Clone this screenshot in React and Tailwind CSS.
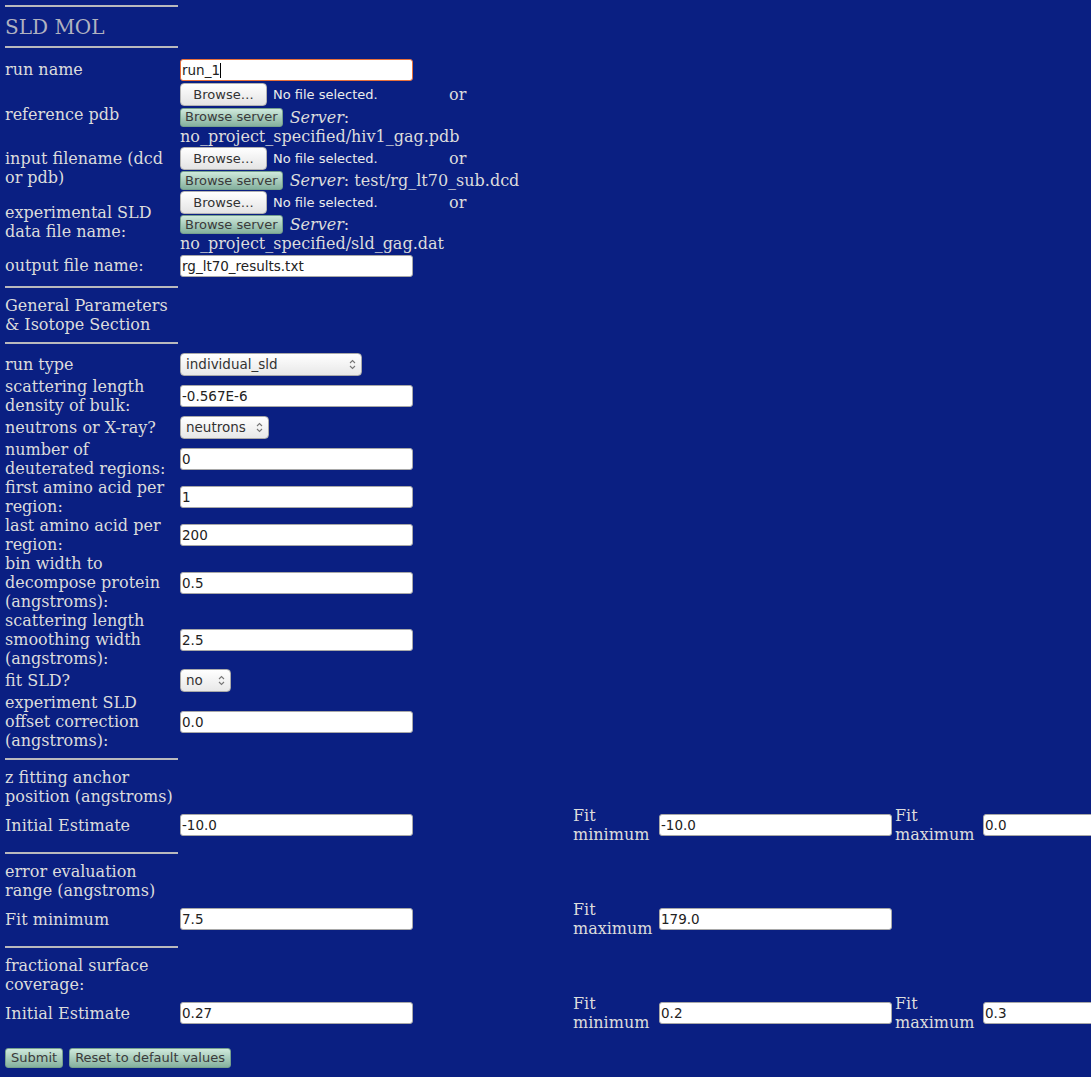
import React from 'react';

const serif = "font-['DejaVu_Serif',serif]";
const sans = "font-['DejaVu_Sans',sans-serif]";

function Rule() {
  return <div className="my-[8px] h-[2px] w-[173px] bg-[#b9b9bd]" />;
}

function TextBox({ value, focused = false }) {
  return (
    <div className="relative w-[233px] shrink-0">
      <input
        readOnly
        defaultValue={value}
        className={`${sans} block h-[22px] w-[233px] rounded-[3px] border bg-white px-[1px] text-[13.5px] text-[#222] outline-none ${
          focused ? 'border-[#e8703a]' : 'border-[#a8a8a8]'
        }`}
      />
      {focused && <span className="absolute left-[40px] top-[4px] h-[15px] w-px bg-black" />}
    </div>
  );
}

function Select({ value, width }) {
  return (
    <div className={`relative shrink-0 ${width}`}>
      <select
        defaultValue={value}
        className={`${sans} block h-[23px] w-full appearance-none rounded-[4px] border border-[#a9a9a9] bg-linear-to-b from-white to-[#e8e8e8] pl-[5px] text-[13.5px] text-[#333] outline-none`}
      >
        <option>{value}</option>
      </select>
      <svg
        className="pointer-events-none absolute right-[6px] top-[6px]"
        width="7"
        height="11"
        viewBox="0 0 7 11"
      >
        <path d="M1 4 L3.5 1.5 L6 4" fill="none" stroke="#777" strokeWidth="1.1" />
        <path d="M1 7 L3.5 9.5 L6 7" fill="none" stroke="#777" strokeWidth="1.1" />
      </svg>
    </div>
  );
}

// the greenish server-side buttons; the form's own submit/reset are a touch bigger
function GreenButton({ children, tall = false }) {
  return (
    <button
      className={`${sans} ${
        tall ? 'h-[20px] px-[5px]' : 'h-[19px] px-[4px]'
      } shrink-0 rounded-[3px] border border-[#76a08e] bg-linear-to-b from-[#cfe9dc] to-[#85b19e] text-[13px] leading-[16px] text-[#3a3a3a]`}
    >
      {children}
    </button>
  );
}

function Lines({ lines }) {
  return lines.map((line, i) => (
    <React.Fragment key={i}>
      {i > 0 && <br />}
      {line}
    </React.Fragment>
  ));
}

function Row({ label, children }) {
  return (
    <div className="flex min-h-[25px] items-center">
      <div className="w-[175px] shrink-0 leading-[19px]">
        <Lines lines={label} />
      </div>
      {children}
    </div>
  );
}

function FileLine() {
  return (
    <div className="flex h-[25px] items-center">
      <div className="flex w-[269px] shrink-0 items-center">
        <button
          className={`${sans} h-[23px] w-[87px] rounded-[4px] border border-[#b3b3b3] bg-linear-to-b from-white to-[#e4e4e4] text-[13px] text-[#333]`}
        >
          Browse…
        </button>
        <span className={`${sans} ml-[6px] text-[13px] text-[#ececec]`}>No file selected.</span>
      </div>
      <span>or</span>
    </div>
  );
}

function FileField({ path, wrap, roomy = false }) {
  return (
    <div className="flex shrink-0 flex-col">
      <FileLine />
      <div className={`flex items-center leading-[19px] ${roomy ? 'h-[20px]' : 'h-[19px]'}`}>
        <GreenButton>Browse server</GreenButton>
        <span className="ml-[7px] whitespace-nowrap">
          <i>Server</i>:{!wrap && ` ${path}`}
        </span>
      </div>
      {wrap && <div className="leading-[19px]">{path}</div>}
    </div>
  );
}

function FitLabel({ width, lines }) {
  return (
    <div className={`${width} shrink-0 leading-[19px]`}>
      <Lines lines={lines} />
    </div>
  );
}

function FitRow({ label, initial, min, max }) {
  return (
    <Row label={[label]}>
      <div className="w-[393px] shrink-0">
        <TextBox value={initial} />
      </div>
      <FitLabel width="w-[86px]" lines={['Fit', 'minimum']} />
      <div className="w-[236px] shrink-0">
        <TextBox value={min} />
      </div>
      <FitLabel width="w-[88px]" lines={['Fit', 'maximum']} />
      <TextBox value={max} />
    </Row>
  );
}

export default function App() {
  return (
    <div className={`${serif} min-h-screen w-full overflow-hidden bg-[#0a1f82] pl-[5px] pt-[5px] text-[16px] text-[#dcdcdc]`}>
      <div className="h-[2px] w-[173px] bg-[#b9b9bd]" />
      <div className="mt-[8px] text-[20px] leading-[24px] text-[#b0b2c0]">SLD MOL</div>
      <div className="mb-[9px] mt-[7px] h-[2px] w-[173px] bg-[#b9b9bd]" />

      <Row label={['run name']}>
        <TextBox value="run_1" focused />
      </Row>
      <Row label={['reference pdb']}>
        <FileField path="no_project_specified/hiv1_gag.pdb" wrap roomy />
      </Row>
      <Row label={['input filename (dcd', 'or pdb)']}>
        <FileField path="test/rg_lt70_sub.dcd" />
      </Row>
      <Row label={['experimental SLD', 'data file name:']}>
        <FileField path="no_project_specified/sld_gag.dat" wrap />
      </Row>
      <Row label={['output file name:']}>
        <TextBox value="rg_lt70_results.txt" />
      </Row>

      <Rule />
      <div className="leading-[19px]">
        General Parameters
        <br />& Isotope Section
      </div>
      <Rule />

      <Row label={['run type']}>
        <Select value="individual_sld" width="w-[182px]" />
      </Row>
      <Row label={['scattering length', 'density of bulk:']}>
        <TextBox value="-0.567E-6" />
      </Row>
      <Row label={['neutrons or X-ray?']}>
        <Select value="neutrons" width="w-[89px]" />
      </Row>
      <Row label={['number of', 'deuterated regions:']}>
        <TextBox value="0" />
      </Row>
      <Row label={['first amino acid per', 'region:']}>
        <TextBox value="1" />
      </Row>
      <Row label={['last amino acid per', 'region:']}>
        <TextBox value="200" />
      </Row>
      <Row label={['bin width to', 'decompose protein', '(angstroms):']}>
        <TextBox value="0.5" />
      </Row>
      <Row label={['scattering length', 'smoothing width', '(angstroms):']}>
        <TextBox value="2.5" />
      </Row>
      <Row label={['fit SLD?']}>
        <Select value="no" width="w-[51px]" />
      </Row>
      <Row label={['experiment SLD', 'offset correction', '(angstroms):']}>
        <TextBox value="0.0" />
      </Row>

      <Rule />
      <div className="leading-[19px]">
        z fitting anchor
        <br />
        position (angstroms)
      </div>
      <FitRow label="Initial Estimate" initial="-10.0" min="-10.0" max="0.0" />

      <Rule />
      <div className="leading-[19px]">
        error evaluation
        <br />
        range (angstroms)
      </div>
      <Row label={['Fit minimum']}>
        <div className="w-[393px] shrink-0">
          <TextBox value="7.5" />
        </div>
        <FitLabel width="w-[86px]" lines={['Fit', 'maximum']} />
        <TextBox value="179.0" />
      </Row>

      <Rule />
      <div className="leading-[19px]">
        fractional surface
        <br />
        coverage:
      </div>
      <FitRow label="Initial Estimate" initial="0.27" min="0.2" max="0.3" />

      <div className="mt-[16px] flex gap-[6px]">
        <GreenButton tall>Submit</GreenButton>
        <GreenButton tall>Reset to default values</GreenButton>
      </div>
    </div>
  );
}
